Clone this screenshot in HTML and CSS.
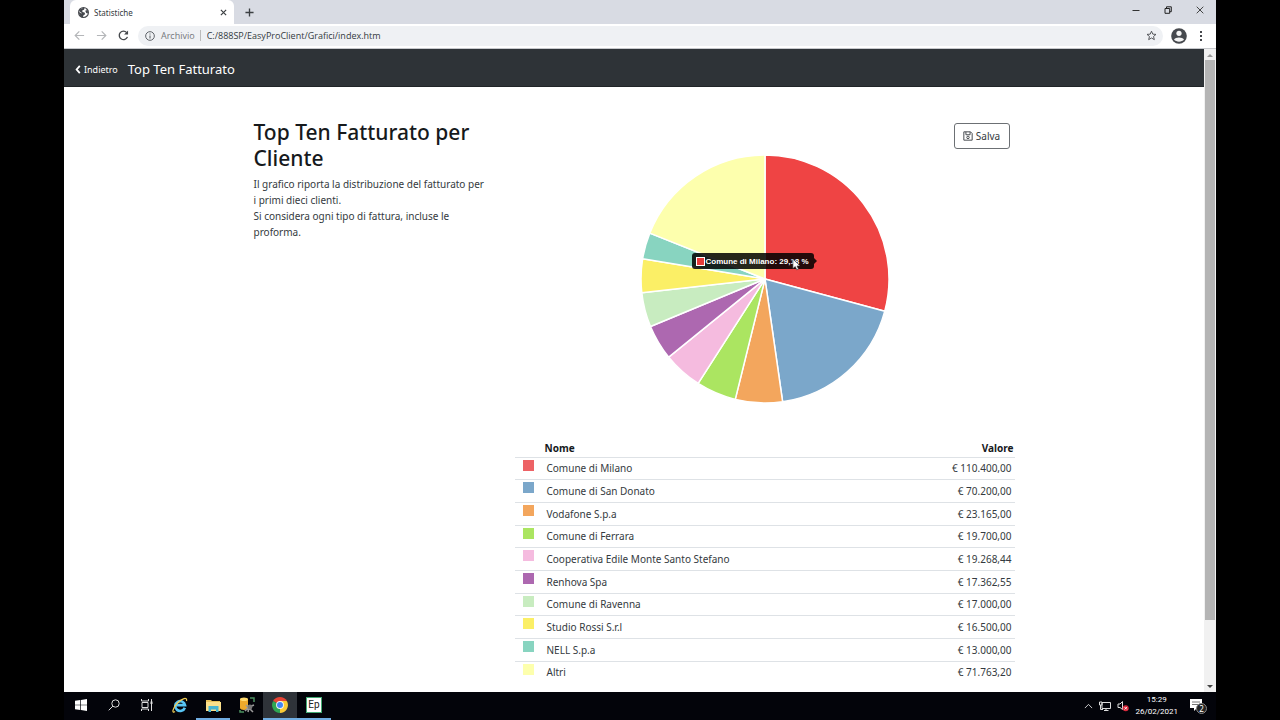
FILE: index.html
```html
<!DOCTYPE html>
<html lang="it">
<head>
<meta charset="utf-8">
<title>Statistiche</title>
<link rel="stylesheet" href="styles.css">
</head>
<body>
<div class="screen">
  <header class="tabs">
    <div class="tab">
      <svg class="globe" viewBox="0 0 20 20" width="11" height="11"><circle cx="10" cy="10" r="9" fill="#fff" stroke="#45484d" stroke-width="2"/><path d="M2 7C4 2 9 1 12 2L11 5 8 6 8 9 12 10 13 13 10 15 9 19C4 18 1 13 2 9L6 12 7 11 4 9ZM14 3 18 7 18 12 15 11 13 7 16 6Z" fill="#45484d"/></svg>
      <span class="tab-title">Statistiche</span>
      <button class="icon-btn" aria-label="Chiudi scheda"><svg viewBox="0 0 8 8" width="7" height="7"><path d="M1 1 7 7M7 1 1 7" stroke="#3c4043" stroke-width="1.4"/></svg></button>
    </div>
    <button class="icon-btn new-tab" aria-label="Nuova scheda"><svg viewBox="0 0 10 10" width="9" height="9"><path d="M5 0.5V9.5M0.5 5H9.5" stroke="#3c4043" stroke-width="1.5"/></svg></button>
    <div class="window-buttons">
      <button class="icon-btn" aria-label="Riduci"><svg viewBox="0 0 8 8" width="8" height="8"><path d="M0.5 4.5H7.5" stroke="#333"/></svg></button>
      <button class="icon-btn" aria-label="Ripristina"><svg viewBox="0 0 8 8" width="8" height="8"><path d="M1 2.5H5.7V7.3H1ZM2.5 2.5V.8H7.3V5.7H5.7" fill="none" stroke="#222"/></svg></button>
      <button class="icon-btn" aria-label="Chiudi"><svg viewBox="0 0 8 8" width="8" height="8"><path d="M.7.7 7.3 7.3M7.3.7.7 7.3" stroke="#333" stroke-width=".9"/></svg></button>
    </div>
  </header>

  <div class="toolbar">
    <button class="icon-btn nav-btn" aria-label="Indietro"><svg viewBox="0 0 12 12" width="11" height="11"><path d="M11 6H1.5M5.8 1.5 1.3 6 5.8 10.5" fill="none" stroke="#b4b6b9" stroke-width="1.3"/></svg></button>
    <button class="icon-btn nav-btn" aria-label="Avanti"><svg viewBox="0 0 12 12" width="11" height="11"><path d="M1 6H10.500M6.200 1.500 10.700 6 6.200 10.500" fill="none" stroke="#b4b6b9" stroke-width="1.3"/></svg></button>
    <button class="icon-btn nav-btn" aria-label="Ricarica"><svg viewBox="0 0 12 12" width="11" height="11"><path d="M10.300 7.500A4.600 4.600 0 1 1 9.500 2.900" fill="none" stroke="#45484c" stroke-width="1.500"/><path d="M11 .6V5H6.600Z" fill="#45484c"/></svg></button>
    <div class="address">
      <svg viewBox="0 0 12 12" width="10" height="10"><circle cx="6" cy="6" r="5.200" fill="none" stroke="#5f6368" stroke-width="1.200"/><path d="M6 5.300V9M6 3V4.300" stroke="#5f6368" stroke-width="1.300"/></svg>
      <label class="scheme" for="url">Archivio</label>
      <input id="url" class="url" type="text" value="C:/888SP/EasyProClient/Grafici/index.htm">
      <button class="icon-btn" aria-label="Preferiti"><svg viewBox="0 0 12 12" width="11" height="11"><path d="M6 1.300 7.400 4.500 10.900 4.800 8.200 7.100 9.100 10.500 6 8.700 2.900 10.500 3.800 7.100 1.100 4.800 4.600 4.500Z" fill="none" stroke="#4a4d51"/></svg></button>
    </div>
    <button class="icon-btn" aria-label="Profilo"><svg viewBox="0 0 16 16" width="16" height="16"><circle cx="8" cy="8" r="7.800" fill="#46494e"/><circle cx="8" cy="5.300" r="2.600" fill="#f4f4f4"/><path d="M3 11.600C4.300 8.700 11.700 8.700 13 11.600 11 14.300 5 14.300 3 11.600Z" fill="#f4f4f4"/></svg></button>
    <button class="icon-btn menu-btn" aria-label="Menu"><svg viewBox="0 0 4 12" width="4" height="12"><path d="M1 1H3V3H1ZM1 5H3V7H1ZM1 9H3V11H1Z" fill="#45484c"/></svg></button>
  </div>

  <div class="viewport">
    <div class="page">
      <nav class="navbar">
        <a class="back" href="#"><svg viewBox="0 0 6 10" width="6" height="9"><path d="M5 1 1.500 5 5 9" fill="none" stroke="#fff" stroke-width="2"/></svg>Indietro</a>
        <span class="brand">Top Ten Fatturato</span>
      </nav>
      <main class="container">
        <section class="intro">
          <h1>Top Ten Fatturato per Cliente</h1>
          <p>Il grafico riporta la distribuzione del fatturato per i primi dieci clienti.<br>Si considera ogni tipo di fattura, incluse le proforma.</p>
        </section>
        <section class="report">
          <button class="save"><svg viewBox="0 0 12 12" width="10" height="10"><path d="M1 1H9L11 3V11H1ZM3.500 1V4.500H8.500V1" fill="none" stroke="#4a4e52" stroke-width="1.200"/><circle cx="6" cy="7.700" r="1.500" fill="none" stroke="#4a4e52" stroke-width="1.200"/></svg>Salva</button>
          <div class="chart">
            <svg class="pie" viewBox="-123 -123 246 246" width="248" height="248" stroke="#fff" stroke-width="1.500" stroke-linejoin="bevel" role="img" aria-label="Distribuzione del fatturato">
              <path fill="#ef4444" d="M0 0V-123A123 123 0 0 1 118.800 31.900Z"/>
              <path fill="#7ba7ca" d="M0 0 118.800 31.900A123 123 0 0 1 17.500 121.800Z"/>
              <path fill="#f3a65d" d="M0 0 17.500 121.800A123 123 0 0 1 -29.500 119.400Z"/>
              <path fill="#abe561" d="M0 0-29.500 119.400A123 123 0 0 1 -66.300 103.600Z"/>
              <path fill="#f5bbdf" d="M0 0-66.300 103.600A123 123 0 0 1 -95.500 77.500Z"/>
              <path fill="#ad68b0" d="M0 0-95.500 77.500A123 123 0 0 1 -113.600 47.100Z"/>
              <path fill="#c8ecc0" d="M0 0-113.600 47.100A123 123 0 0 1 -122.200 13.600Z"/>
              <path fill="#fbef66" d="M0 0-122.200 13.600A123 123 0 0 1 -121.400 -20Z"/>
              <path fill="#88d4c0" d="M0 0-121.400-20A123 123 0 0 1 -114.300 -45.500Z"/>
              <path fill="#fdffad" d="M0 0-114.300-45.500A123 123 0 0 1 0 -123Z"/>
            </svg>
            <div class="tooltip"><i class="key"></i>Comune di Milano: 29,18 %</div>
            <svg class="cursor" viewBox="0 0 10 14" width="9" height="13"><path d="M1 1V11.500L3.600 9.300 5.300 13 7.200 12.100 5.600 8.600H9Z" fill="#fff" stroke="#333" stroke-width=".7"/></svg>
          </div>
          <table class="data">
            <thead><tr><th class="swatch-col"></th><th>Nome</th><th class="num">Valore</th></tr></thead>
            <tbody>
              <tr><td><i class="swatch red"></i></td><td>Comune di Milano</td><td class="num">€ 110.400,00</td></tr>
              <tr><td><i class="swatch blue"></i></td><td>Comune di San Donato</td><td class="num">€ 70.200,00</td></tr>
              <tr><td><i class="swatch orange"></i></td><td>Vodafone S.p.a</td><td class="num">€ 23.165,00</td></tr>
              <tr><td><i class="swatch lime"></i></td><td>Comune di Ferrara</td><td class="num">€ 19.700,00</td></tr>
              <tr><td><i class="swatch pink"></i></td><td>Cooperativa Edile Monte Santo Stefano</td><td class="num">€ 19.268,44</td></tr>
              <tr><td><i class="swatch purple"></i></td><td>Renhova Spa</td><td class="num">€ 17.362,55</td></tr>
              <tr><td><i class="swatch mint"></i></td><td>Comune di Ravenna</td><td class="num">€ 17.000,00</td></tr>
              <tr><td><i class="swatch yellow"></i></td><td>Studio Rossi S.r.l</td><td class="num">€ 16.500,00</td></tr>
              <tr><td><i class="swatch teal"></i></td><td>NELL S.p.a</td><td class="num">€ 13.000,00</td></tr>
              <tr><td><i class="swatch cream"></i></td><td>Altri</td><td class="num">€ 71.763,20</td></tr>
            </tbody>
          </table>
        </section>
      </main>
    </div>
    <div class="scrollbar">
      <svg viewBox="0 0 6 4" width="6" height="4"><path d="M0 4 3 1 6 4Z" fill="#999"/></svg>
      <div class="track"><div class="thumb"></div></div>
      <svg viewBox="0 0 6 4" width="6" height="4"><path d="M0 0 3 3 6 0Z" fill="#444"/></svg>
    </div>
  </div>

  <footer class="taskbar">
    <button class="task" aria-label="Start"><svg viewBox="0 0 12 12" width="12" height="12"><path d="M0 1.700 5.300 1V5.700H0ZM6 .9 12 0V5.700H6ZM0 6.300H5.300V11L0 10.300ZM6 6.300H12V12L6 11.100Z" fill="#fff"/></svg></button>
    <button class="task" aria-label="Cerca"><svg viewBox="0 0 12 12" width="12" height="12"><circle cx="7.500" cy="4.500" r="3.700" fill="none" stroke="#ddd"/><path d="M4.900 7.100.7 11.300" stroke="#ddd"/></svg></button>
    <button class="task" aria-label="Visualizzazione attività"><svg viewBox="0 0 12 12" width="12" height="12"><path d="M.5 0V2H7.500V0M1 3.500H7V8.500H1ZM.5 12V10H7.500V12M10.500 0V12" fill="none" stroke="#ddd"/><path d="M9.500 2.500H11.500V5H9.500Z" fill="#ddd"/></svg></button>
    <button class="task" aria-label="Internet Explorer"><svg viewBox="0 0 16 16" width="16" height="16"><path d="M12.800 10.700A4.900 4.900 0 1 1 13 8.200H4" fill="none" stroke="#58c5f4" stroke-width="2.700"/><path d="M3 14.500C-.5 17 .5 11 5.500 6 10 1.500 15.500-.5 14.500 4" fill="none" stroke="#f4cf54" stroke-width="1.200"/></svg></button>
    <button class="task open" aria-label="Esplora file"><svg viewBox="0 0 15 13" width="15" height="13"><path d="M0 1H5L6 2H14V12H0Z" fill="#e8c15a"/><path d="M0 3H15V12H0Z" fill="#fbe08b"/><path d="M2.500 7H12.500V13H10V10.500H5V13H2.500Z" fill="#48b5d1"/></svg></button>
    <button class="task" aria-label="Database"><svg viewBox="0 0 16 16" width="16" height="16"><path d="M1 2V11C1 13.500 9 13.500 9 11V2Z" fill="#eda92b"/><ellipse cx="5" cy="2.300" rx="4" ry="1.800" fill="#ffda70"/><path d="M11 1H15V5M1 13V15H5" fill="none" stroke="#4c9060" stroke-width="1.500"/><path d="M6 14 10 10M7 8 14 15M10 10 15 8M10 10 9 15" stroke="#999" stroke-width="1.600"/><circle cx="11" cy="10" r="2.400" fill="#777"/></svg></button>
    <button class="task open active" aria-label="Chrome"><svg viewBox="0 0 16 16" width="16" height="16"><path d="M8 8 1.100 4A8 8 0 0 1 14.900 4Z" fill="#e94435"/><path d="M8 8 14.900 4A8 8 0 0 1 8 16Z" fill="#fbca35"/><path d="M8 8V16A8 8 0 0 1 1.100 4Z" fill="#2fa653"/><path d="M8 4H14.900L11.500 10 8 16 11.500 10Z" fill="#fbca35"/><circle cx="8" cy="8" r="3.900" fill="#f5f5f5"/><circle cx="8" cy="8" r="3" fill="#4285f4"/></svg></button>
    <button class="task open" aria-label="EasyPro"><span class="ep">Ep</span></button>
    <div class="tray">
      <svg viewBox="0 0 10 6" width="9" height="6"><path d="M1 5.300 5 1.200 9 5.300" fill="none" stroke="#ddd"/></svg>
      <svg viewBox="0 0 12 10" width="12" height="10"><path d="M3 1.500H11.500V7.500H3ZM7 7.500V9.500M5 9.500H9.500M.5 1V4H3V1ZM1.500 4V8.500H4" fill="none" stroke="#ddd"/></svg>
      <svg viewBox="0 0 12 12" width="12" height="12"><path d="M1 4H3L5.500 1.500V9.500L3 7.500H1Z" fill="none" stroke="#ddd"/><circle cx="8.700" cy="8.300" r="3" fill="#d92b3d"/><path d="M7.500 7 10 9.500M10 7 7.500 9.500" stroke="#fff" stroke-width=".8"/></svg>
      <div class="clock"><span>15:29</span><span>26/02/2021</span></div>
      <div class="notice">
        <svg viewBox="0 0 12 12" width="12" height="12"><path d="M0 0H12V9H7L4 12V9H0Z" fill="#fff"/><path d="M2 3H10M2 5.500H10" stroke="#777"/></svg>
        <span class="count">2</span>
      </div>
    </div>
  </footer>
</div>
</body>
</html>
```
FILE: styles.css
```css
* { box-sizing: border-box; }
body { margin: 0; background: #000; font-family: "Segoe UI", "Noto Sans", sans-serif; font-size: 11px; color: #343a40; }
button, input { font: inherit; color: inherit; }
svg { display: block; flex: none; }
.screen { height: 100vh; margin: 0 5%; display: flex; flex-direction: column; overflow: hidden; }
.icon-btn { border: 0; background: none; padding: 0; display: grid; place-items: center; flex: none; }

.tabs { height: 24px; flex: none; display: flex; background: #d8dbe3; }
.tab { width: 164px; margin-left: 6px; padding: 0 7px 0 8px; display: flex; align-items: center; gap: 5px; background: #fff; border-radius: 6px 6px 0 0; }
.tab-title { flex: 1; font-size: 8px; }
.new-tab { width: 30px; }
.window-buttons { margin-left: auto; display: flex; gap: 24px; padding: 0 12px 4px; }

.toolbar { height: 25px; flex: none; display: flex; align-items: center; gap: 8px; padding: 0 9px 1px 8px; background: #fff; border-bottom: 1px solid #c6c8cc; }
.nav-btn { width: 14px; }
.address { flex: 1; height: 20px; display: flex; align-items: center; gap: 6px; padding: 0 6px 0 7px; border-radius: 10px; background: #eff1f4; font-family: "Segoe UI", "Open Sans", sans-serif; font-size: 9px; }
.scheme { color: #74777b; padding-right: 5px; border-right: 1px solid #bbb; line-height: 11px; }
.url { flex: 1; border: 0; background: none; padding: 0; outline: 0; }
.menu-btn { width: 12px; }

.viewport { flex: 1; min-height: 0; display: flex; background: #fff; }
.page { flex: 1; overflow: hidden; }
.navbar { height: 38px; display: flex; align-items: center; gap: 10px; padding: 3px 11px 0; background: #2e3337; border-bottom: 1px solid #202427; color: #fff; }
.back { display: flex; align-items: center; gap: 3px; color: #fff; text-decoration: none; font-size: 9px; }
.brand { font-size: 13px; }
.container { max-width: 761px; margin: 0 auto; display: grid; grid-template-columns: 261px 1fr; font-size: 10px; }
.intro { padding: 32px 26px 0 0; }
h1 { margin: 0 0 5px; font-size: 21px; line-height: 26px; font-weight: 500; color: #16191c; }
p { margin: 0; line-height: 16px; }
.report { padding-top: 36px; display: flex; flex-direction: column; }
.save { align-self: flex-end; margin-right: 5px; height: 26px; width: 56px; padding: 0; display: flex; align-items: center; justify-content: center; gap: 3px; border: 1px solid #6c7074; border-radius: 3px; background: #fff; }
.chart { position: relative; align-self: center; margin-top: 6px; }
.tooltip { position: absolute; left: 51px; top: 98px; height: 16px; padding: 0 5px 0 4px; display: flex; align-items: center; gap: 1px; border-radius: 3px; background: rgba(0, 0, 0, .85); color: #fff; font: bold 8px "Liberation Sans", Arial, sans-serif; white-space: nowrap; }
.tooltip::after { content: ""; position: absolute; left: 100%; top: 5px; border: 3px solid transparent; border-left-color: rgba(0, 0, 0, .85); border-right: 0; }
.key { width: 9px; height: 9px; border: 1px solid #fff; background: #e63b3b; }
.cursor { position: absolute; left: 151px; top: 103px; }
.data { width: 100%; height: 244px; margin-top: 36px; border-collapse: collapse; }
th, td { padding: 0 3px; text-align: left; vertical-align: middle; border-bottom: 1px solid #dee2e6; line-height: 14px; }
th { height: 18px; padding: 0 1px; color: #16191c; }
.swatch-col { width: 29px; }
td:first-child { padding: 2px 0 0 8px; vertical-align: top; }
tbody tr:last-child td { border-bottom: 0; }
th.num, td.num { text-align: right; }
.swatch { display: block; width: 11px; height: 11px; }
.red { background: #ed6265; }
.blue { background: #7ba7ca; }
.orange { background: #f3a65d; }
.lime { background: #abe561; }
.pink { background: #f5bbdf; }
.purple { background: #ad68b0; }
.mint { background: #c8ecc0; }
.yellow { background: #fbef66; }
.teal { background: #88d4c0; }
.cream { background: #fdffad; }

.scrollbar { width: 12px; flex: none; padding: 4px 1px 3px; display: flex; flex-direction: column; align-items: center; gap: 3px; background: #f1f1f1; }
.track { flex: 1; align-self: stretch; }
.thumb { height: 90%; background: #b5b5b5; }

.taskbar { height: 28px; flex: none; display: flex; background: #03040a; }
.task { width: 33px; border: 0; padding: 0; background: none; display: grid; place-items: center; border-bottom: 2px solid transparent; }
.open { width: 34px; border-bottom-color: #70ade2; }
.active { background-color: #2f3339; }
.ep { width: 16px; height: 16px; border: 1px solid #42aa72; background: #fff; color: #222; font: 10px/14px Roboto, sans-serif; text-align: center; }
.tray { margin-left: auto; display: flex; align-items: center; gap: 6px; padding-right: 12px; color: #fff; }
.clock { display: flex; flex-direction: column; align-items: center; font-family: Roboto, sans-serif; font-size: 8px; line-height: 12px; }
.notice { position: relative; width: 20px; padding: 0 0 2px 6px; }
.count { position: absolute; left: 12px; top: 4px; width: 11px; height: 11px; border: 1px solid #888; border-radius: 50%; background: #222; font-size: 8px; line-height: 9px; text-align: center; }
```
